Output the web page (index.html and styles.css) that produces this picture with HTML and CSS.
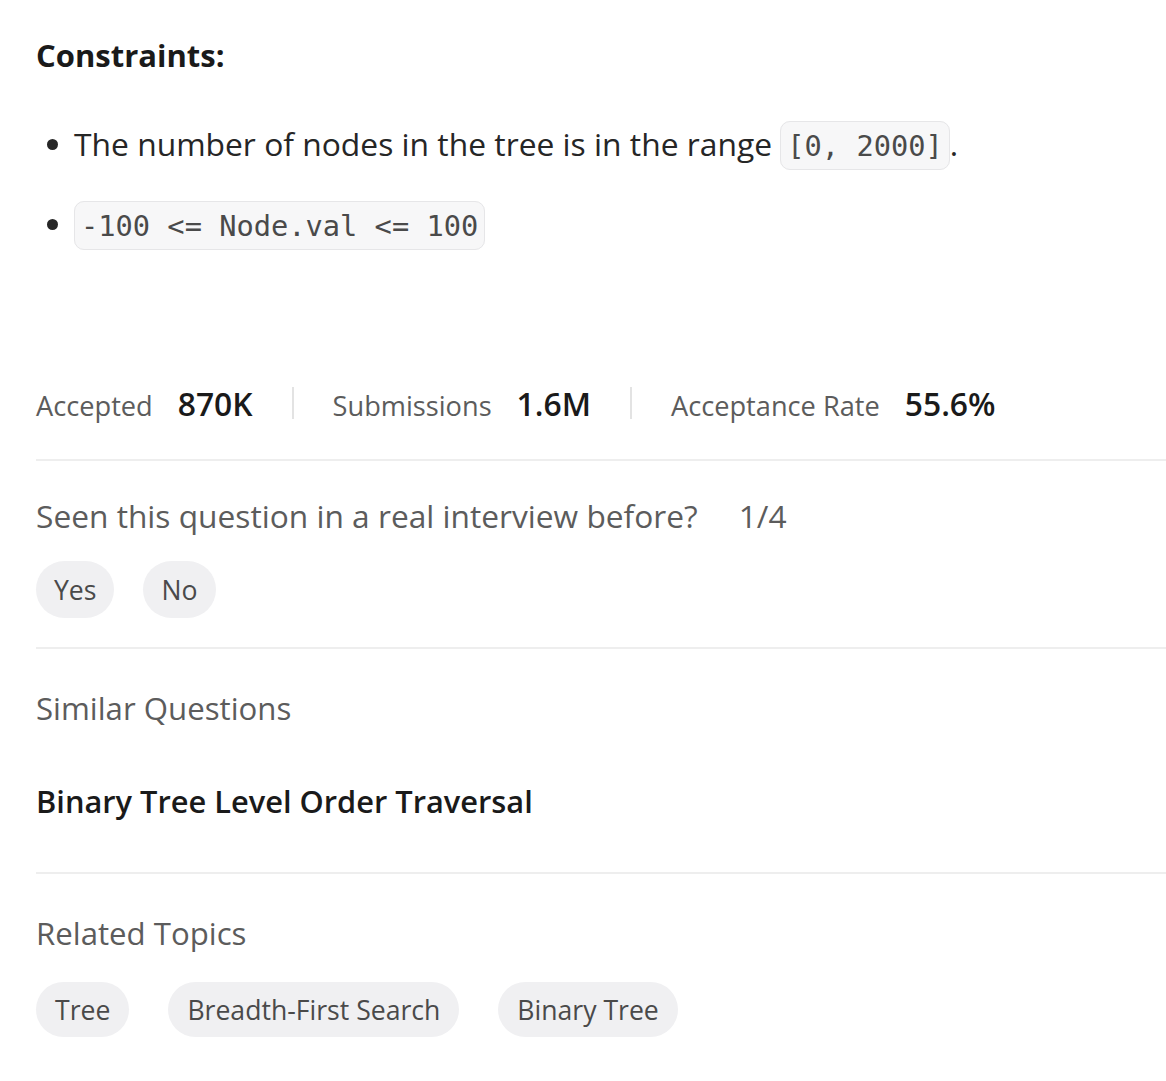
FILE: index.html
```html
<!DOCTYPE html>
<html>
<head>
<meta charset="utf-8">
<link rel="stylesheet" href="styles.css">
</head>
<body>
<div class="page">
  <section class="constraints">
    <h3 class="title">Constraints:</h3>
    <ul class="list">
      <li>The number of nodes in the tree is in the range <code>[0, 2000]</code>.</li>
      <li><code>-100 &lt;= Node.val &lt;= 100</code></li>
    </ul>
  </section>

  <div class="stats">
    <div class="stat"><span class="label">Accepted</span><span class="value">870K</span></div>
    <div class="divider"></div>
    <div class="stat"><span class="label">Submissions</span><span class="value">1.6M</span></div>
    <div class="divider"></div>
    <div class="stat"><span class="label">Acceptance Rate</span><span class="value">55.6%</span></div>
  </div>

  <section class="block interview">
    <div class="question"><span>Seen this question in a real interview before?</span><span class="count">1/4</span></div>
    <div class="pills">
      <button class="pill">Yes</button>
      <button class="pill">No</button>
    </div>
  </section>

  <section class="block similar">
    <div class="heading">Similar Questions</div>
    <div class="sim-item">Binary Tree Level Order Traversal</div>
  </section>

  <section class="block topics">
    <div class="heading">Related Topics</div>
    <div class="tags">
      <span class="pill tag">Tree</span>
      <span class="pill tag">Breadth-First Search</span>
      <span class="pill tag">Binary Tree</span>
    </div>
  </section>
</div>
</body>
</html>
```

FILE: styles.css
```css
html, body {
  margin: 0;
  padding: 0;
  background: #ffffff;
}
body {
  font-family: "Open Sans", "Noto Sans", sans-serif;
  color: #262626;
}
.page {
  padding-left: 36px;
}
.title {
  margin: 0;
  padding-top: 33px;
  font-size: 31px;
  font-weight: 700;
  line-height: 44px;
  color: #1a1a1a;
}
.list {
  margin: 0;
  padding: 42px 0 0 38px;
  list-style: none;
}
.list li {
  position: relative;
  font-size: 31.8px;
  line-height: 50px;
  margin-bottom: 30px;
  color: #262626;
}
.list li::before {
  content: "";
  position: absolute;
  left: -27px;
  top: 20px;
  width: 11px;
  height: 11px;
  border-radius: 50%;
  background: #262626;
}
code {
  font-family: "DejaVu Sans Mono", "Liberation Mono", monospace;
  font-size: 28.7px;
  line-height: 1;
  color: #4a4a4a;
  background: #f7f7f8;
  border: 1.5px solid #e6e6e8;
  border-radius: 10px;
  padding: 7px 6px 6px;
}
.stats {
  display: flex;
  align-items: center;
  margin-top: 134px;
  height: 40px;
}
.stat {
  display: flex;
  align-items: baseline;
  gap: 25px;
}
.label {
  font-size: 27.2px;
  color: #5c5c5c;
}
.value {
  font-size: 31.8px;
  font-weight: 600;
  color: #1a1a1a;
}
.divider {
  width: 2px;
  height: 32px;
  background: #e3e3e3;
  margin: 0 39px;
}
.block {
  border-top: 2px solid #eeeeee;
}
.interview {
  margin-top: 36px;
  padding-top: 33px;
  padding-bottom: 29px;
}
.question {
  display: flex;
  gap: 41px;
  font-size: 31.7px;
  line-height: 44px;
  color: #5c5c5c;
}
.pills {
  display: flex;
  gap: 29px;
  margin-top: 23px;
}
.pill {
  font-family: inherit;
  border: none;
  background: #f0f0f2;
  border-radius: 999px;
  font-size: 26.6px;
  color: #4a4a4a;
  padding: 0 18px;
  height: 57px;
  display: inline-flex;
  align-items: center;
}
.similar {
  padding-top: 37px;
  padding-bottom: 49px;
}
.heading {
  font-size: 31.2px;
  line-height: 44px;
  color: #5c5c5c;
}
.sim-item {
  margin-top: 49px;
  font-size: 30.8px;
  font-weight: 600;
  line-height: 44px;
  color: #1a1a1a;
}
.topics {
  padding-top: 37px;
}
.tags {
  display: flex;
  gap: 39px;
  margin-top: 27px;
}
.tag {
  height: 55px;
  padding: 0 19px;
}
```
